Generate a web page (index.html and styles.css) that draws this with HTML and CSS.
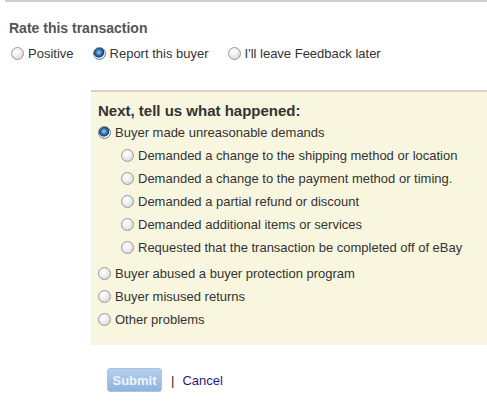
FILE: index.html
```html
<!DOCTYPE html>
<html lang="en">
<head>
    <meta charset="UTF-8">
    <title>Leave Feedback</title>
    <link rel="stylesheet" href="styles.css">
</head>
<body>
    <div class="feedback-page">
        <h2 class="rate-title">Rate this transaction</h2>
        <div class="rate-options">
            <label class="radio-item"><input type="radio" name="rating"> Positive</label>
            <label class="radio-item"><input type="radio" name="rating" checked> Report this buyer</label>
            <label class="radio-item"><input type="radio" name="rating"> I'll leave Feedback later</label>
        </div>

        <div class="report-box">
            <h3 class="report-title">Next, tell us what happened:</h3>
            <label class="radio-item report-row"><input type="radio" name="reason" checked> Buyer made unreasonable demands</label>
            <div class="sub-options">
                <label class="radio-item report-row"><input type="radio" name="demand"> Demanded a change to the shipping method or location</label>
                <label class="radio-item report-row"><input type="radio" name="demand"> Demanded a change to the payment method or timing.</label>
                <label class="radio-item report-row"><input type="radio" name="demand"> Demanded a partial refund or discount</label>
                <label class="radio-item report-row"><input type="radio" name="demand"> Demanded additional items or services</label>
                <label class="radio-item report-row"><input type="radio" name="demand"> Requested that the transaction be completed off of eBay</label>
            </div>
            <label class="radio-item report-row"><input type="radio" name="reason"> Buyer abused a buyer protection program</label>
            <label class="radio-item report-row"><input type="radio" name="reason"> Buyer misused returns</label>
            <label class="radio-item report-row"><input type="radio" name="reason"> Other problems</label>
        </div>

        <div class="form-actions">
            <button type="button" class="submit-btn" disabled>Submit</button>
            <span class="divider">|</span>
            <a href="#" class="cancel-link">Cancel</a>
        </div>
    </div>
</body>
</html>
```

FILE: styles.css
```css
body {
    margin: 0;
    font-family: "Liberation Sans", Arial, sans-serif;
    font-size: 13px;
    color: #333;
    background: #fff;
}
.feedback-page {
    border-top: 2px solid #cfcfcf;
    margin-left: 5px;
    padding-top: 18px;
}
.rate-title {
    margin: 0 0 0 4px;
    font-size: 14px;
    font-weight: bold;
    color: #555;
    line-height: 17px;
}
.rate-options {
    display: flex;
    gap: 19px;
    margin: 7px 0 0 6px;
    height: 18px;
    align-items: center;
}
.radio-item {
    display: flex;
    align-items: center;
    gap: 4px;
    white-space: nowrap;
}
.radio-item input {
    appearance: none;
    -webkit-appearance: none;
    width: 13px;
    height: 13px;
    margin: 0;
    border-radius: 50%;
    border: 1px solid #9a9a9a;
    background: radial-gradient(circle at 40% 35%, #fff 0, #f0f0f0 40%, #c9c9c9 100%);
    flex: none;
}
.radio-item input:checked {
    border-color: #6e7c8c;
    background: radial-gradient(circle at 45% 40%, #9fd0f4 0, #2a6ca8 35%, #1d3f66 55%, #dfe6ee 60%, #f6f6f6 100%);
}
.report-box {
    margin: 28px 0 0 86px;
    border-top: 2px solid #d8d1cc;
    background: #f8f6df;
    padding: 10px 0 14px 7px;
}
.report-title {
    margin: 0 0 1px;
    font-size: 15px;
    font-weight: bold;
    color: #333;
    line-height: 18px;
}
.report-row {
    height: 23px;
}
.sub-options {
    padding-left: 23px;
}
.sub-options + .report-row {
    margin-top: 3px;
}
.form-actions {
    display: flex;
    align-items: center;
    margin: 23px 0 0 102px;
    gap: 8px;
}
.submit-btn {
    width: 55px;
    height: 24px;
    border: 1px solid #a9c3e2;
    border-radius: 3px;
    background: linear-gradient(#b6d0ee, #8fb2df);
    color: #eef4fb;
    font-family: "Liberation Sans", Arial, sans-serif;
    font-size: 13px;
    font-weight: bold;
    padding: 0;
}
.divider {
    color: #222;
    margin-left: 1px;
}
.cancel-link {
    color: #1f1a80;
    text-decoration: none;
}
```
